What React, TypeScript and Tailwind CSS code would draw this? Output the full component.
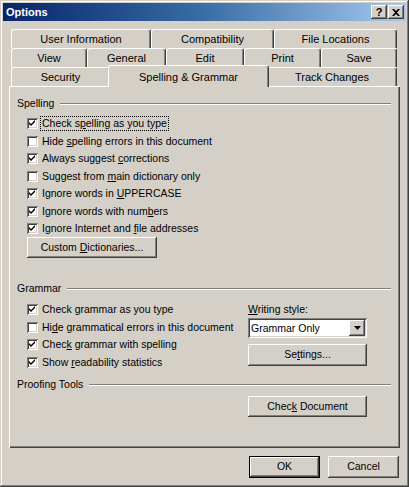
import React from "react";

const raised =
  "bg-[#d4d0c8] shadow-[inset_-1px_-1px_#404040,inset_1px_1px_#ffffff,inset_-2px_-2px_#808080,inset_2px_2px_#d4d0c8]";
const sunken =
  "shadow-[inset_1px_1px_#808080,inset_-1px_-1px_#ffffff,inset_2px_2px_#404040,inset_-2px_-2px_#d4d0c8]";

function U({ children }: { children: React.ReactNode }) {
  return <span className="underline underline-offset-[1px]">{children}</span>;
}

function Check({ checked }: { checked: boolean }) {
  return (
    <div className={`w-[11px] h-[11px] bg-white shrink-0 flex items-center justify-center ${sunken}`}>
      {checked && (
        <svg width="7" height="7" viewBox="0 0 7 7">
          <path d="M0 2 L2 4 L6 0 L6 2 L2 6 L0 4 Z" fill="#000" />
        </svg>
      )}
    </div>
  );
}

function CheckRow({
  checked,
  children,
  h,
  focus,
}: {
  checked: boolean;
  children: React.ReactNode;
  h: string;
  focus?: boolean;
}) {
  return (
    <div className={`flex items-center ${h}`}>
      <Check checked={checked} />
      <span
        className={`ml-[3px] leading-[13px] px-[1px] ${
          focus ? "outline outline-1 outline-dotted outline-black" : ""
        }`}
      >
        {children}
      </span>
    </div>
  );
}

function GroupHeader({ label }: { label: string }) {
  return (
    <div className="flex items-center h-[13px] pr-[9px]">
      <span className="leading-[13px]">{label}</span>
      <div className="flex-1 ml-[6px] border-t border-t-[#808080] border-b border-b-white" />
    </div>
  );
}

function Button({
  children,
  w,
  h,
  def,
}: {
  children: React.ReactNode;
  w: string;
  h: string;
  def?: boolean;
}) {
  if (def) {
    return (
      <div className={`${w} ${h} border border-black`}>
        <div className={`w-full h-full flex items-center justify-center ${raised}`}>{children}</div>
      </div>
    );
  }
  return <div className={`${w} ${h} flex items-center justify-center ${raised}`}>{children}</div>;
}

function Tab({
  label,
  w,
  selected,
}: {
  label: string;
  w: string;
  selected?: boolean;
}) {
  return (
    <div
      className={`${w} ${
        selected ? "h-[22px] -mx-[2px] -mt-[2px] relative z-10 pt-[4px]" : "h-[19px] pt-[2px]"
      } bg-[#d4d0c8] border-l border-t border-white border-r border-r-[#404040] rounded-tl-[3px] rounded-tr-[3px] shadow-[inset_-1px_0_#808080] flex justify-center leading-[15px] text-[11px]`}
    >
      {label}
    </div>
  );
}

export default function App() {
  return (
    <div
      className="w-[409px] h-[487px] bg-[#d4d0c8] p-[3px] flex flex-col text-[10.5px] text-black shadow-[inset_-1px_-1px_#404040,inset_1px_1px_#d4d0c8,inset_-2px_-2px_#808080,inset_2px_2px_#ffffff]"
      style={{ fontFamily: '"Liberation Sans", Arial, sans-serif' }}
    >
      {/* Title bar */}
      <div className="h-[18px] bg-linear-to-r from-[#0a246a] via-[#3a6ea5] to-[#a6caf0] flex items-center pl-[3px] pr-[2px]">
        <span className="text-white font-bold text-[11px] leading-[14px]">Options</span>
        <div className="flex-1" />
        <div className={`w-[16px] h-[14px] flex items-center justify-center font-bold text-[11px] leading-[11px] ${raised}`}>
          ?
        </div>
        <div className={`w-[16px] h-[14px] ml-[1px] flex items-center justify-center ${raised}`}>
          <svg width="8" height="7" viewBox="0 0 8 7">
            <path d="M0 0 H2 L4 2 L6 0 H8 L5 3.5 L8 7 H6 L4 5 L2 7 H0 L3 3.5 Z" fill="#000" />
          </svg>
        </div>
      </div>

      {/* Tabs + panel */}
      <div className="mt-[8px] mx-[6px] flex flex-col">
        <div className="ml-[2px] mr-[3px] flex flex-col">
          <div className="flex h-[19px]">
            <Tab label="User Information" w="w-[140px]" />
            <Tab label="Compatibility" w="w-[123px]" />
            <Tab label="File Locations" w="w-[123px]" />
          </div>
          <div className="flex h-[19px]">
            <Tab label="View" w="w-[76px]" />
            <Tab label="General" w="w-[79px]" />
            <Tab label="Edit" w="w-[78px]" />
            <Tab label="Print" w="w-[77px]" />
            <Tab label="Save" w="w-[76px]" />
          </div>
          <div className="flex h-[19px] items-start">
            <Tab label="Security" w="w-[99px]" />
            <Tab label="Spelling & Grammar" w="w-[161px]" selected />
            <Tab label="Track Changes" w="w-[130px]" />
          </div>
        </div>

        <div className="h-[362px] border-l border-t border-white shadow-[inset_-1px_-1px_#404040,inset_-2px_-2px_#808080] pl-[7px] pt-[10px] flex flex-col">
          <GroupHeader label="Spelling" />
          <div className="pl-[10px] mt-[5px] flex flex-col">
            <CheckRow checked h="h-[17px]" focus>
              Check s<U>p</U>elling as you type
            </CheckRow>
            <CheckRow checked={false} h="h-[18px]">
              Hide <U>s</U>pelling errors in this document
            </CheckRow>
            <CheckRow checked h="h-[17px]">
              Always suggest <U>c</U>orrections
            </CheckRow>
            <CheckRow checked={false} h="h-[18px]">
              Suggest from <U>m</U>ain dictionary only
            </CheckRow>
            <CheckRow checked h="h-[17px]">
              Ignore words in <U>U</U>PPERCASE
            </CheckRow>
            <CheckRow checked h="h-[18px]">
              Ignore words with num<U>b</U>ers
            </CheckRow>
            <CheckRow checked h="h-[17px]">
              Ignore Internet and <U>f</U>ile addresses
            </CheckRow>
            <Button w="w-[130px]" h="h-[21px]">
              <span>
                Custom <U>D</U>ictionaries...
              </span>
            </Button>
          </div>

          <div className="mt-[24px]">
            <GroupHeader label="Grammar" />
          </div>
          <div className="flex">
            <div className="w-[231px] pl-[10px] mt-[5px] flex flex-col">
              <CheckRow checked h="h-[18px]">
                Check <U>g</U>rammar as you type
              </CheckRow>
              <CheckRow checked={false} h="h-[18px]">
                Hi<U>d</U>e grammatical errors in this document
              </CheckRow>
              <CheckRow checked h="h-[17px]">
                Chec<U>k</U> grammar with spelling
              </CheckRow>
              <CheckRow checked h="h-[18px]">
                Show <U>r</U>eadability statistics
              </CheckRow>
            </div>
            <div className="mt-[5px] flex flex-col w-[119px]">
              <div className="h-[18px] flex items-center leading-[13px]">
                <span>
                  <U>W</U>riting style:
                </span>
              </div>
              <div className={`h-[20px] bg-white flex items-center pl-[3px] pr-[2px] ${sunken}`}>
                <span className="flex-1 leading-[13px]">Grammar Only</span>
                <div className={`w-[16px] h-[16px] flex items-center justify-center ${raised}`}>
                  <svg width="7" height="4" viewBox="0 0 7 4">
                    <path d="M0 0 H7 L3.5 4 Z" fill="#000" />
                  </svg>
                </div>
              </div>
              <div className="mt-[6px]">
                <Button w="w-[119px]" h="h-[22px]">
                  <span>
                    Se<U>t</U>tings...
                  </span>
                </Button>
              </div>
            </div>
          </div>

          <div className="mt-[7px]">
            <GroupHeader label="Proofing Tools" />
          </div>
          <div className="mt-[5px] ml-[231px]">
            <Button w="w-[119px]" h="h-[21px]">
              <span>
                Chec<U>k</U> Document
              </span>
            </Button>
          </div>
        </div>
      </div>

      {/* Footer */}
      <div className="mt-[8px] flex justify-end mr-[7px] gap-[8px]">
        <Button w="w-[71px]" h="h-[22px]" def>
          OK
        </Button>
        <Button w="w-[71px]" h="h-[22px]">
          Cancel
        </Button>
      </div>
    </div>
  );
}
